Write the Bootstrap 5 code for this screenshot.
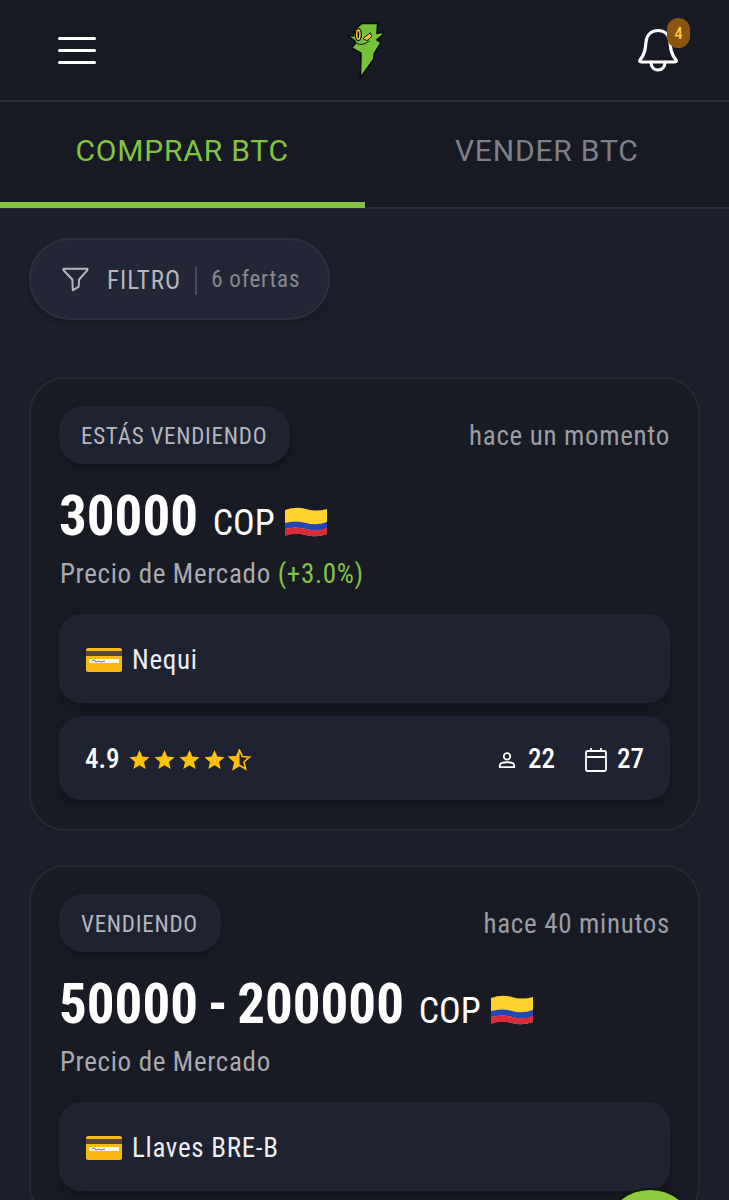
<!DOCTYPE html>
<html lang="es">
<head>
    <meta charset="UTF-8" />
    <meta name="viewport" content="width=device-width, initial-scale=1.0"/>
    <title>Ofertas</title>
    <link href="https://cdn.jsdelivr.net/npm/bootstrap@5.3.0/dist/css/bootstrap.min.css" rel="stylesheet">
    <style>
        html, body { height: 100%; overflow: hidden; }
        body { background: #1c202c; font-family: Roboto, "Liberation Sans", sans-serif; font-stretch: 75%; color: #fff; }
        .app-shell { height: 1200px; overflow: hidden; position: relative; }
        .top-bar { height: 102px; background: #171a23; border-bottom: 2px solid #2a2d37; padding: 0 29px 0 58px; }
        .burger { width: 38px; }
        .burger span { display: block; height: 3px; background: #fff; border-radius: 2px; margin-top: 9px; }
        .burger span:first-child { margin-top: 0; }
        .logo-box { width: 80px; height: 80px; margin-left: 5px; }
        .bell-box { width: 80px; height: 80px; position: relative; }
        .bell-count { position: absolute; left: 47px; top: 8px; width: 23px; height: 30px; border-radius: 12px; background: #8a5510; color: #ffc83c; font-size: 17px; font-weight: 500; line-height: 30px; text-align: center; }
        .tab-bar { height: 107px; background: #171a23; border-bottom: 2px solid #2a2d37; }
        .tab-item { font-size: 30px; font-stretch: 100%; letter-spacing: .8px; color: #7d808a; height: 105px; line-height: 97px; text-align: center; }
        .tab-item.is-on { color: #82c341; border-bottom: 6px solid #82c341; margin-bottom: -1px; height: 106px; }
        .filter-pill { width: 301px; height: 82px; margin: 29px 0 57px 29px; border: 2px solid #2b3040; border-radius: 41px; background: #222636; padding-left: 31px; box-shadow: 0 4px 12px rgba(0,0,0,.25); }
        .filter-name { font-size: 25px; letter-spacing: 1px; color: #b4b7c0; margin-left: 18px; padding-right: 14px; border-right: 2px solid #454958; line-height: 28px; position: relative; top: 2px; }
        .filter-count { font-size: 23px; letter-spacing: .8px; color: #858894; margin-left: 14px; padding-top: 3px; }
        .offer-box { margin: 0 29px 34px; padding: 27px 28px 29px; background: #181b24; border: 2px solid #242833; border-radius: 36px; box-shadow: 0 0 8px rgba(0,0,0,.15); }
        .offer-tag { height: 58px; padding: 3px 23px 0 22px; line-height: 55px; border-radius: 24px; background: #1f2231; font-size: 23px; letter-spacing: .75px; color: #b4b7c0; box-shadow: 0 4px 10px rgba(0,0,0,.3); }
        .offer-time { font-size: 27px; letter-spacing: .67px; color: #9a9da6; padding-top: 2px; }
        .offer-price { font-size: 55px; font-weight: 700; line-height: 66px; margin-top: 19px; word-spacing: -3px; }
        .offer-cur { font-size: 36px; font-weight: 400; margin-left: 5px; }
        .offer-flag { vertical-align: -4px; }
        .offer-note { font-size: 27px; letter-spacing: .66px; color: #a7aab2; line-height: 36px; margin-left: 1px; }
        .offer-up { color: #82c341; }
        .offer-row { background: #1f2231; border-radius: 22px; padding: 3px 26px 0 27px; box-shadow: 0 5px 12px rgba(0,0,0,.3); }
        .pay-row { height: 89px; margin-top: 22px; font-size: 27px; letter-spacing: .7px; color: #eceef2; gap: 10px; }
        .stat-row { height: 84px; margin-top: 13px; font-size: 27px; font-weight: 500; padding-left: 26px; }
        .star-strip { margin-left: 9px; }
        .stat-gap { margin-left: 12px; }
        .stat-gap-wide { margin-left: 30px; margin-right: 10px; }
        .help-fab { position: absolute; left: 602px; top: 1188px; width: 96px; height: 96px; border-radius: 50%; background: #8fcb3f; border: 2px solid #0d1a0c; }
    </style>
</head>
<body>
<div class="app-shell">
    <header class="top-bar d-flex align-items-center justify-content-between">
        <div class="burger"><span></span><span></span><span></span></div>
        <div class="logo-box">
            <svg width="80" height="80" viewBox="0 0 240 240">
                <path d="M100 60 L122 40 L170 40 L168 70 L188 66 L182 78 L168 90 L180 98 L160 130 L158 148 L118 204 L120 130 L92 114 L104 98 L100 92 L78 76 L98 78 Z" fill="#76c13a" stroke="#0c0c0c" stroke-width="5" stroke-linejoin="round"/>
                <ellipse cx="112" cy="74" rx="9" ry="18" fill="#ffc62b" stroke="#111" stroke-width="4"/>
                <ellipse cx="112" cy="74" rx="2.500" ry="11" fill="#111"/>
                <path d="M126 86 L148 68 L152 80 L138 92 Z" fill="#ffc62b" stroke="#111" stroke-width="3"/>
                <path d="M106 100 Q124 110 146 92" fill="none" stroke="#111" stroke-width="3"/>
            </svg>
        </div>
        <div class="bell-box">
            <svg width="80" height="80" viewBox="0 0 80 80" fill="none" stroke="#fff" stroke-width="3.2" stroke-linejoin="round" stroke-linecap="round">
                <path d="M20 50 C25 44 25.500 38 26 32 C27 24 32 20.500 38 20.500 C44 20.500 49 24 50 32 C50.500 38 51 44 56 50 C57 51.500 56 52 54 52 L22 52 C20 52 19 51.500 20 50 Z"/>
                <path d="M31 52 C31 57 34 60 38 60 C42 60 45 57 45 52"/>
            </svg>
            <span class="bell-count">4</span>
        </div>
    </header>

    <nav class="tab-bar d-flex">
        <div class="tab-item is-on w-50">COMPRAR BTC</div>
        <div class="tab-item w-50">VENDER BTC</div>
    </nav>

    <div class="filter-pill d-flex align-items-center">
        <svg width="27" height="27" viewBox="0 0 30 28" fill="none" stroke="#b4b7c0" stroke-width="2.200" stroke-linejoin="round">
            <path d="M2 2 H28 C29 2 28 4 27.500 4.500 L19 14 L18.500 22 L12 26 L11.500 14 L2.500 4.500 C1.500 3.500 1 2 2 2 Z"/>
        </svg>
        <span class="filter-name">FILTRO</span>
        <span class="filter-count">6 ofertas</span>
    </div>

    <section class="offer-box">
        <div class="d-flex justify-content-between align-items-center">
            <span class="offer-tag">ESTÁS VENDIENDO</span>
            <span class="offer-time">hace un momento</span>
        </div>
        <div class="offer-price">30000 <span class="offer-cur">COP</span>
            <svg class="offer-flag" width="44" height="32" viewBox="0 0 44 32"><path d="M1 3 Q12 -1 22 2 T43 2 V27 Q32 31 22 28 T1 28 Z" fill="#ffd230"/><path d="M1 16 Q12 13 22 16 T43 15 V22 Q32 25 22 22 T1 22 Z" fill="#2147b8"/><path d="M1 22 Q12 19 22 22 T43 21 V27 Q32 31 22 28 T1 29 Z" fill="#d92b3a"/></svg>
        </div>
        <div class="offer-note">Precio de Mercado <span class="offer-up">(+3.0%)</span></div>
        <div class="offer-row pay-row d-flex align-items-center">
            <svg width="36" height="24" viewBox="0 0 36 24"><rect width="36" height="24" rx="2" fill="#fdb913"/><rect y="3" width="36" height="5" fill="#57483a"/><rect x="3" y="11" width="30" height="4" fill="#fff7e0"/><path d="M6 13 l2 -1 l2 2 l3 -1 l2 1 l4 -1" stroke="#555" stroke-width=".8" fill="none"/></svg>
            <span>Nequi</span>
        </div>
        <div class="offer-row stat-row d-flex align-items-center justify-content-between">
            <div class="d-flex align-items-center">
                <span>4.9</span>
                <svg class="star-strip" width="124" height="22" viewBox="0 0 124 22">
                    <defs><path id="stara" d="M10.500 1 L13.300 7.500 L20.500 8.200 L15 13 L16.700 20 L10.500 16.300 L4.300 20 L6 13 L0.500 8.200 L7.700 7.500 Z"/></defs>
                    <use href="#stara" fill="#ffc107"/>
                    <use href="#stara" x="25" fill="#ffc107"/>
                    <use href="#stara" x="50" fill="#ffc107"/>
                    <use href="#stara" x="75" fill="#ffc107"/>
                    <use href="#stara" x="100" fill="none" stroke="#ffc107" stroke-width="1.600"/>
                    <path d="M110.500 1 V16.300 L104.300 20 L106 13 L100.500 8.200 L107.700 7.500 Z" fill="#ffc107"/>
                </svg>
            </div>
            <div class="d-flex align-items-center">
                <svg width="18" height="18" viewBox="0 0 20 20" fill="none" stroke="#fff" stroke-width="2"><circle cx="10" cy="6" r="3.600"/><path d="M2 18 V16 C2 13.500 5 12.500 10 12.500 C15 12.500 18 13.500 18 16 V18 Z"/></svg>
                <span class="stat-gap">22</span>
                <svg class="stat-gap-wide" width="22" height="24" viewBox="0 0 22 24" fill="none" stroke="#fff" stroke-width="1.800"><rect x="1" y="3" width="20" height="20" rx="1.500"/><path d="M1 9 H21 M6 0 V3 M16 0 V3"/></svg>
                <span>27</span>
            </div>
        </div>
    </section>

    <section class="offer-box">
        <div class="d-flex justify-content-between align-items-center">
            <span class="offer-tag">VENDIENDO</span>
            <span class="offer-time">hace 40 minutos</span>
        </div>
        <div class="offer-price">50000 - 200000 <span class="offer-cur">COP</span>
            <svg class="offer-flag" width="44" height="32" viewBox="0 0 44 32"><path d="M1 3 Q12 -1 22 2 T43 2 V27 Q32 31 22 28 T1 28 Z" fill="#ffd230"/><path d="M1 16 Q12 13 22 16 T43 15 V22 Q32 25 22 22 T1 22 Z" fill="#2147b8"/><path d="M1 22 Q12 19 22 22 T43 21 V27 Q32 31 22 28 T1 29 Z" fill="#d92b3a"/></svg>
        </div>
        <div class="offer-note">Precio de Mercado</div>
        <div class="offer-row pay-row d-flex align-items-center">
            <svg width="36" height="24" viewBox="0 0 36 24"><rect width="36" height="24" rx="2" fill="#fdb913"/><rect y="3" width="36" height="5" fill="#57483a"/><rect x="3" y="11" width="30" height="4" fill="#fff7e0"/><path d="M6 13 l2 -1 l2 2 l3 -1 l2 1 l4 -1" stroke="#555" stroke-width=".8" fill="none"/></svg>
            <span>Llaves BRE-B</span>
        </div>
    </section>

    <div class="help-fab"></div>
</div>
<script src="https://cdn.jsdelivr.net/npm/bootstrap@5.3.0/dist/js/bootstrap.bundle.min.js"></script>
</body>
</html>
